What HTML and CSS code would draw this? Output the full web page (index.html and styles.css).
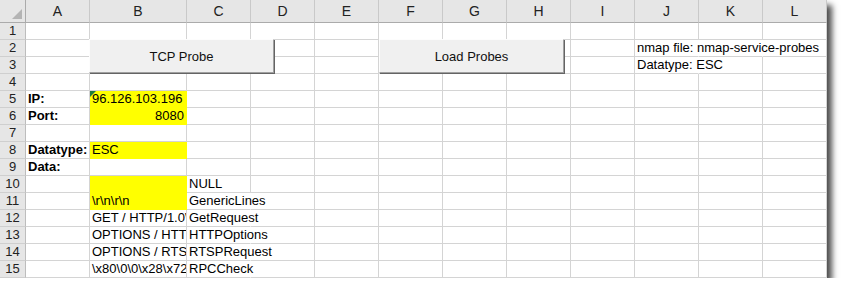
FILE: index.html
```html
<!DOCTYPE html>
<html lang="en">
<head>
    <meta charset="UTF-8">
    <meta name="viewport" content="width=device-width, initial-scale=1.0">
    <title>nmap probes</title>
    <link rel="stylesheet" href="styles.css">
</head>
<body>
    <div class="sheet">
        <table class="grid">
            <colgroup>
                <col class="c-head">
                <col class="c-std">
                <col class="c-wide">
                <col class="c-std"><col class="c-std"><col class="c-std"><col class="c-std">
                <col class="c-std"><col class="c-std"><col class="c-std"><col class="c-std">
                <col class="c-std"><col class="c-std">
            </colgroup>
            <tr class="head">
                <th class="corner"></th>
                <th>A</th><th>B</th><th>C</th><th>D</th><th>E</th><th>F</th>
                <th>G</th><th>H</th><th>I</th><th>J</th><th>K</th><th>L</th>
            </tr>
            <tr>
                <th>1</th>
                <td></td><td></td><td></td><td></td><td></td><td></td>
                <td></td><td></td><td></td><td></td><td></td><td></td>
            </tr>
            <tr>
                <th>2</th>
                <td></td><td></td><td></td><td></td><td></td><td></td>
                <td></td><td></td><td></td><td class="spill">nmap file: nmap-service-probes</td><td class="spill"></td><td></td>
            </tr>
            <tr>
                <th>3</th>
                <td></td><td></td><td></td><td></td><td></td><td></td>
                <td></td><td></td><td></td><td class="spill">Datatype: ESC</td><td></td><td></td>
            </tr>
            <tr>
                <th>4</th>
                <td></td><td></td><td></td><td></td><td></td><td></td>
                <td></td><td></td><td></td><td></td><td></td><td></td>
            </tr>
            <tr>
                <th>5</th>
                <td class="label">IP:</td><td class="fill flag">96.126.103.196</td><td></td><td></td><td></td><td></td>
                <td></td><td></td><td></td><td></td><td></td><td></td>
            </tr>
            <tr>
                <th>6</th>
                <td class="label">Port:</td><td class="fill num">8080</td><td></td><td></td><td></td><td></td>
                <td></td><td></td><td></td><td></td><td></td><td></td>
            </tr>
            <tr>
                <th>7</th>
                <td></td><td></td><td></td><td></td><td></td><td></td>
                <td></td><td></td><td></td><td></td><td></td><td></td>
            </tr>
            <tr>
                <th>8</th>
                <td class="label">Datatype:</td><td class="fill">ESC</td><td></td><td></td><td></td><td></td>
                <td></td><td></td><td></td><td></td><td></td><td></td>
            </tr>
            <tr>
                <th>9</th>
                <td class="label">Data:</td><td></td><td></td><td></td><td></td><td></td>
                <td></td><td></td><td></td><td></td><td></td><td></td>
            </tr>
            <tr>
                <th>10</th>
                <td></td><td class="fill"></td><td>NULL</td><td></td><td></td><td></td>
                <td></td><td></td><td></td><td></td><td></td><td></td>
            </tr>
            <tr>
                <th>11</th>
                <td></td><td class="fill">\r\n\r\n</td><td class="spill">GenericLines</td><td></td><td></td><td></td>
                <td></td><td></td><td></td><td></td><td></td><td></td>
            </tr>
            <tr>
                <th>12</th>
                <td></td><td>GET / HTTP/1.0\r\n\r\n</td><td class="spill">GetRequest</td><td></td><td></td><td></td>
                <td></td><td></td><td></td><td></td><td></td><td></td>
            </tr>
            <tr>
                <th>13</th>
                <td></td><td>OPTIONS / HTTP/1.0\r\n\r\n</td><td class="spill">HTTPOptions</td><td></td><td></td><td></td>
                <td></td><td></td><td></td><td></td><td></td><td></td>
            </tr>
            <tr>
                <th>14</th>
                <td></td><td>OPTIONS / RTSP/1.0\r\n\r\n</td><td class="spill">RTSPRequest</td><td></td><td></td><td></td>
                <td></td><td></td><td></td><td></td><td></td><td></td>
            </tr>
            <tr>
                <th>15</th>
                <td></td><td>\x80\0\0\x28\x72\xFE\x1D\x13\0\0\0\0\0\0\0\x02</td><td class="spill">RPCCheck</td><td></td><td></td><td></td>
                <td></td><td></td><td></td><td></td><td></td><td></td>
            </tr>
        </table>

        <button class="sheet-btn btn-tcp">TCP Probe</button>
        <button class="sheet-btn btn-load">Load Probes</button>
    </div>
</body>
</html>
```

FILE: styles.css
```css
body {
    margin: 0;
    background-color: #fff;
    font-family: "Liberation Sans", Arial, sans-serif;
    font-size: 13px;
    color: #000;
}
.sheet {
    position: relative;
    width: 827px;
    height: 278px;
    background-color: #fff;
    box-shadow: 5px 5px 6px rgba(0, 0, 0, 0.7);
}
.grid {
    table-layout: fixed;
    border-collapse: separate;
    border-spacing: 0;
    width: 827px;
}
.c-head {
    width: 26px;
}
.c-std {
    width: 64px;
}
.c-wide {
    width: 97px;
}
th,
td {
    box-sizing: border-box;
    height: 17px;
    padding: 0 2px;
    line-height: 16px;
    white-space: nowrap;
    overflow: hidden;
    vertical-align: bottom;
    text-align: left;
    font-weight: normal;
    border-right: 1px solid #d4d4d4;
    border-bottom: 1px solid #d4d4d4;
}
th {
    background-color: #e6e6e6;
    color: #222;
    text-align: center;
    padding: 0;
    border-right-color: #bdbdbd;
    border-bottom-color: #cfcfcf;
}
.head th {
    height: 23px;
    line-height: 21px;
    font-size: 14px;
    border-bottom-color: #ababab;
    border-right-color: #c9c9c9;
}
.head .corner {
    position: relative;
    border-right-color: #ababab;
}
.corner::after {
    content: "";
    position: absolute;
    right: 3px;
    bottom: 3px;
    width: 0;
    height: 0;
    border-left: 10px solid transparent;
    border-bottom: 10px solid #b4b4b4;
}
.label {
    font-weight: bold;
}
.fill {
    background-color: #ffff00;
    border-color: #ffff00;
}
.num {
    text-align: right;
}
.flag {
    position: relative;
}
.flag::before {
    content: "";
    position: absolute;
    top: 0;
    left: 0;
    width: 0;
    height: 0;
    border-top: 6px solid #1e7b3e;
    border-right: 6px solid transparent;
}
.spill {
    overflow: visible;
    border-right-color: transparent;
}
.sheet-btn {
    position: absolute;
    top: 39px;
    width: 185px;
    height: 34px;
    padding: 0;
    font-family: "Liberation Sans", Arial, sans-serif;
    font-size: 13px;
    color: #111;
    background-color: #f0f0f0;
    border: 1px solid;
    border-color: #fdfdfd #a0a0a0 #a0a0a0 #fdfdfd;
    box-shadow: 1px 1px 0 #646464;
}
.btn-tcp {
    left: 89px;
}
.btn-load {
    left: 379px;
}
```
